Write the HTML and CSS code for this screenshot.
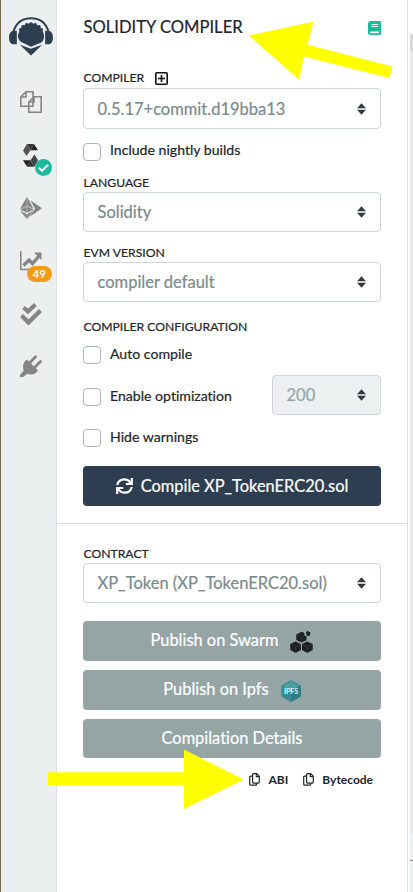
FILE: index.html
```html
<!DOCTYPE html>
<html lang="en">
<head>
<meta charset="utf-8">
<title>Solidity Compiler</title>
<link rel="stylesheet" href="styles.css">
</head>
<body>
<svg class="defs" aria-hidden="true">
  <symbol id="sort" viewBox="0 0 9 12"><path d="M4.500 0.300 9 5.200H0ZM0 6.800H9L4.500 11.700Z"/></symbol>
  <symbol id="copy" viewBox="0 0 11 13"><path d="M4.400.7h3.300l2.600 2.600v6q0 .8-.8.8H4.400q-.8 0-.8-.8V1.500q0-.8.8-.8M7.300.8v2.900h3M3.500 3.200H1.500q-.8 0-.8.8v7.300q0 .9.800.9h5.200q.9 0 .9-.9v-1" fill="none" stroke="currentColor" stroke-width="1.200"/></symbol>
</svg>
<div class="app">
  <nav class="rail">
    <svg class="logo" viewBox="0 0 46 40" fill="#2d3e50">
      <path d="M5 15C8 5 14 1.300 23 1.300S38 5 41 15" fill="none" stroke="#2d3e50" stroke-width="2"/>
      <path d="M8.500 14v14H5.500C2 28 .5 25 .5 21S2 14 5.500 14ZM37.500 14v14h3c3.500 0 5-3 5-7s-1.500-7-5-7Z"/>
      <path d="m10 17 1-2-.5-3 2.500-.8.5-3 3 .3 1.500-2.700 2.500 1.200L23 5l2.500 2 2.500-1.200 1.500 2.700 3-.3.500 3 2.500.8-.5 3 1 2c1 4 0 7-2 9L23 30.500l-11-5.500c-2-2-3-5-2-8Z"/>
      <path d="m11.500 28.500 11.500 4 11.500-4L23 39.500Z"/>
    </svg>
    <svg class="ri files" viewBox="0 0 22 22" fill="#ebeff0" stroke="#858585" stroke-width="1.600"><path d="M6 .8h7v14.500H.8V6ZM6 .8V6H.8M14 5.800h7.200v15.400H8.800V11ZM14 5.800V11H8.800"/></svg>
    <div class="ri solidity">
      <svg viewBox="0 0 15 23"><path d="m4 0 3.500 6.200L3.500 12 0 6.500Z" fill="#555"/><path d="M4 0h7L7.500 6.200Z" fill="#383838"/><path d="M11 0 7.500 6.200H15Z" fill="#222"/><path d="M0 16.200h7.500L4 22.700Z" fill="#222"/><path d="M7.500 16.200 11.500 22.700H4Z" fill="#333"/><path d="m11.500 10.500 3.500 5.700-3.500 6.500-4-6.500Z" fill="#444"/></svg>
      <svg class="ok" viewBox="0 0 16 16"><circle cx="8" cy="8" r="8" fill="#1abc9c"/><path d="m3.700 8.300 3 2.800 5.600-5.800" fill="none" stroke="#fff" stroke-width="1.900"/></svg>
    </div>
    <svg class="ri run" viewBox="0 0 22 22" fill="#858585"><path d="M6.800 0v9L0 12ZM7.200 0 13.500 11.800 7.200 9ZM6.800 9.500v6.200L.2 12.500ZM7.200 9.500l6.400 3-6.400 3.200ZM0 13.800l6.800 3.300V22ZM7.200 17.100l6.300-3.300L7.200 22ZM10 3 22 11.200 10 19.500l5-8Z"/></svg>
    <div class="ri chart">
      <svg viewBox="0 0 22 20" fill="none" stroke="#858585"><path d="M.8 0v18.500H22" stroke-width="1.500"/><path d="m3.500 14.500 5.500-5.500 3.500 3.500L19 5" stroke-width="3.300"/><path d="M14 1.500h7.500V9Z" fill="#858585" stroke="none"/></svg>
      <span class="count">49</span>
    </div>
    <svg class="ri checks" viewBox="0 0 22 22" fill="none" stroke="#858585"><path d="m3.500 4.500 4.500 4L15.500 1.500" stroke-width="4"/><path d="m1.500 12.500 7 7L20.500 7.500" stroke-width="4.400"/></svg>
    <svg class="ri plug" viewBox="0 0 22 22" fill="#858585"><path d="m4.500 7 1.500-1.500L17 16.500 15.500 18c-3 2-6 1.800-8 .8L3 22H0v-2l3.800-4.500C2.500 12.500 2.800 9.500 4.500 7Z"/><path d="m7 4.500 11 11-3 3-11-11Z"/><path d="m9.500 8 6-6.300M14.500 12.500l6-6" stroke="#858585" stroke-width="2.800" stroke-linecap="round"/></svg>
  </nav>

  <main class="panel">
    <header class="head">
      <h1>SOLIDITY COMPILER</h1>
      <svg class="book" viewBox="0 0 13 14"><path d="M2.500 0H12q1 0 1 1v12q0 1-1 1H2.500Q0 14 0 11.500v-9Q0 0 2.500 0Z" fill="#1abc9c"/><path d="M3.500 3.500h6.800M3.500 5.500h6.800" stroke="#e8fff9"/><path d="M2.600 10.500H11v1.800H2.600q-.9-.9 0-1.800Z" fill="#fff"/></svg>
    </header>
    <div class="label first">COMPILER
      <svg class="plus" viewBox="0 0 13 13" fill="none" stroke="#111"><rect x=".8" y=".8" width="11.400" height="11.400" rx="1" stroke-width="1.600"/><path d="M6.500 3v7M3 6.500h7" stroke-width="1.600"/></svg>
    </div>
    <div class="select tall"><span>0.5.17+commit.d19bba13</span><svg><use href="#sort"/></svg></div>
    <div class="check nightly"><i></i><span>Include nightly builds</span></div>
    <div class="label language">LANGUAGE</div>
    <div class="select"><span>Solidity</span><svg><use href="#sort"/></svg></div>
    <div class="label evm">EVM VERSION</div>
    <div class="select"><span>compiler default</span><svg><use href="#sort"/></svg></div>
    <div class="label config">COMPILER CONFIGURATION</div>
    <div class="check auto"><i></i><span>Auto compile</span></div>
    <div class="optimize">
      <div class="check"><i></i><span>Enable optimization</span></div>
      <div class="select runs"><span>200</span><svg><use href="#sort"/></svg></div>
    </div>
    <div class="check hide"><i></i><span>Hide warnings</span></div>
    <div class="button primary">
      <svg class="sync" viewBox="0 0 17 16" fill="none" stroke="#fff" stroke-width="2.200"><path d="M1.200 7C2 3.500 4.800 1.300 8.300 1.300c2.700 0 4.800 1.200 6.200 3.500M15.800 9c-.8 3.500-3.600 5.700-7.100 5.700-2.700 0-4.800-1.200-6.200-3.500M15.800 0v6H9.800M1.200 16v-6h6"/></svg>
      <span>Compile XP_TokenERC20.sol</span>
    </div>
    <div class="rule"></div>
    <div class="label contract">CONTRACT</div>
    <div class="select"><span>XP_Token (XP_TokenERC20.sol)</span><svg><use href="#sort"/></svg></div>
    <div class="button swarm"><span>Publish on Swarm</span>
      <svg viewBox="0 0 23 22"><path d="m5.700 10.500 5.200 2.600v6L5.700 22 .3 19.100v-6ZM17.300 10.500l5.400 2.600v6L17.300 22 12 19.100v-6ZM11.500.8l2.500 1 .5 2.700 2 1v3.700l-5 2.300L6.300 9V3.500ZM17.500 0l2.700 1.300v3L18 5.200 16.500 4l-.5-3Z" fill="#1c2022"/><path d="m.3 13.100 5.400 2.700 5.200-2.700M5.700 15.800V22M12 13.100l5.300 2.700 5.400-2.700M17.300 15.800V22M6.300 3.500l5.200 2.700 3-1.700M11.500 6.200v5" stroke="#424a4c" stroke-width=".5" fill="none"/></svg>
    </div>
    <div class="button ipfs"><span>Publish on Ipfs</span>
      <svg viewBox="0 0 20 22"><path d="m10 0 9.700 5.500v11L10 22 .3 16.500v-11Z" fill="#378c91"/><path d="m10 1.500 8 4.500-8 4.500L2 6Z" fill="#4ba0a3"/><path d="M10 11v11l9.700-5.500v-11Z" fill="#2f7d83"/><text x="10" y="14" text-anchor="middle">IPFS</text></svg>
    </div>
    <div class="button details"><span>Compilation Details</span></div>
    <div class="copies">
      <svg><use href="#copy"/></svg><span class="abi">ABI</span>
      <svg><use href="#copy"/></svg><span>Bytecode</span>
    </div>
  </main>
  <aside class="edge"><div class="thumb"></div><div class="track"></div><div class="track-end"></div><div class="track-rest"></div></aside>
</div>
<svg class="arrow" viewBox="0 0 413 892" fill="#ff0"><path d="m249 35.500 64.500-14-6 23.300L392.500 66.500l-3 11.500L304 56.500 299 79.500ZM48 772.300H184V749.500l59.500 30L184 809V785H48Z"/></svg>
</body>
</html>
```
FILE: styles.css
```css
* { box-sizing: border-box; }
body { margin: 0; background: #fff; color: #212529; font-family: Lato, "Liberation Sans", sans-serif; font-variant-ligatures: none; overflow: hidden; }
svg { display: block; flex: none; }
.defs { display: none; }
.app { display: grid; grid-template-columns: 57px 351px 5px; height: 892px; }

.rail { display: flex; flex-direction: column; align-items: center; background: #ebeff0; border-left: 1px solid #79664a; border-right: 1px solid #dbdfe3; }
.logo { width: 46px; height: 39px; margin: 17px 0 0 4px; }
.ri { width: 22px; height: 22px; margin-left: 5px; }
.files { margin-top: 35px; }
.solidity { position: relative; margin-top: 31px; height: 23px; }
.solidity > svg:first-child { width: 15px; height: 23px; margin-left: 3px; }
.ok { position: absolute; left: 15px; top: 15px; width: 17px; height: 17px; }
.run { margin-top: 30px; }
.chart { position: relative; margin-top: 32px; height: 20px; }
.chart > svg { width: 22px; height: 20px; }
.count { position: absolute; left: 7px; top: 15px; width: 25px; height: 16px; border-radius: 8px; background: #f39c12; color: #fff; font: bold 11px/16px Lato, sans-serif; letter-spacing: .4px; text-align: center; }
.checks { margin-top: 32px; }
.plug { margin-top: 30px; }

.panel { display: flex; flex-direction: column; padding: 0 26px; border-right: 1px solid #dbdfe3; -webkit-text-stroke: .2px currentColor; }
.head { display: flex; justify-content: space-between; height: 34px; margin-top: 17px; }
h1 { margin: 0; padding-left: .5px; font-size: 16.6px; line-height: 20px; font-weight: 400; }
.book { width: 13px; height: 14px; margin-top: 4px; }
.label { display: flex; align-items: center; height: 18px; padding-left: .5px; font-size: 12.2px; line-height: 18px; white-space: nowrap; }
.first { margin-top: 18px; }
.plus { width: 13px; height: 13px; margin-left: 11px; }
.select { display: flex; align-items: center; justify-content: space-between; height: 40px; padding: 0 14px 0 13.5px; border: 1px solid #ced4da; border-radius: 4px; color: #7b8a8b; background: #fff; font-size: 16.5px; line-height: 20px; white-space: nowrap; }
.select svg { width: 9px; height: 12px; fill: #343a40; }
.tall { height: 41px; margin-top: 1px; }
.check { display: flex; height: 18px; font-size: 14.1px; line-height: 16px; }
.check i { width: 18px; height: 18px; margin-right: 9px; border: 1px solid #adb5bd; border-radius: 4px; }
.nightly { margin-top: 14px; }
.nightly span { margin-top: -1px; }
.language { margin-top: 13px; }
.evm { margin-top: 12px; }
.config { margin-top: 16px; }
.auto { margin-top: 10px; }
.optimize { display: flex; justify-content: space-between; align-items: flex-start; margin-top: 11px; }
.optimize .check { margin-top: 13px; }
.runs { width: 109px; background: #ecf0f1; color: #95a5a6; }
.hide { margin-top: 14px; }
.button { display: flex; align-items: center; justify-content: center; height: 40px; border-radius: 4px; background: #95a5a6; color: #fff; font-size: 16.4px; line-height: 20px; white-space: nowrap; }
.primary { margin-top: 19px; background: #2c3e50; }
.sync { width: 17px; height: 16px; margin-right: 8px; }
.rule { height: 1px; margin: 17px -26px 0; background: #dbdfe3; }
.contract { margin-top: 21px; }
.swarm { margin-top: 18px; }
.swarm span, .ipfs span, .details span { padding-bottom: 2px; }
.swarm svg { width: 23px; height: 22px; margin: 2px 0 0 12px; }
.ipfs, .details { margin-top: 9px; }
.ipfs svg { width: 20px; height: 22px; margin: 2px 0 0 12px; }
.ipfs text { font: bold 7px Lato, sans-serif; fill: #e3f6f6; }
.details { height: 39px; }
.copies { display: flex; align-items: center; justify-content: flex-end; height: 18px; margin-top: 12px; padding-right: 8px; font-size: 12px; font-weight: 700; -webkit-text-stroke: 0; }
.copies svg { width: 11px; height: 13px; margin-right: 8px; }
.abi { margin-right: 15px; }

.edge { display: flex; flex-direction: column; align-items: flex-end; padding-top: 34px; }
.edge div { width: 3px; }
.thumb { height: 17px; background: #d9d9d9; }
.track { height: 783px; background: #e9e9e9; }
.track-end { height: 27px; border-bottom: 1px solid #7d9494; background: #ecf0f1; }
.track-rest { flex: 1; background: #ecf0f1; }
.arrow { position: absolute; left: 0; top: 0; width: 413px; height: 892px; pointer-events: none; }
```
